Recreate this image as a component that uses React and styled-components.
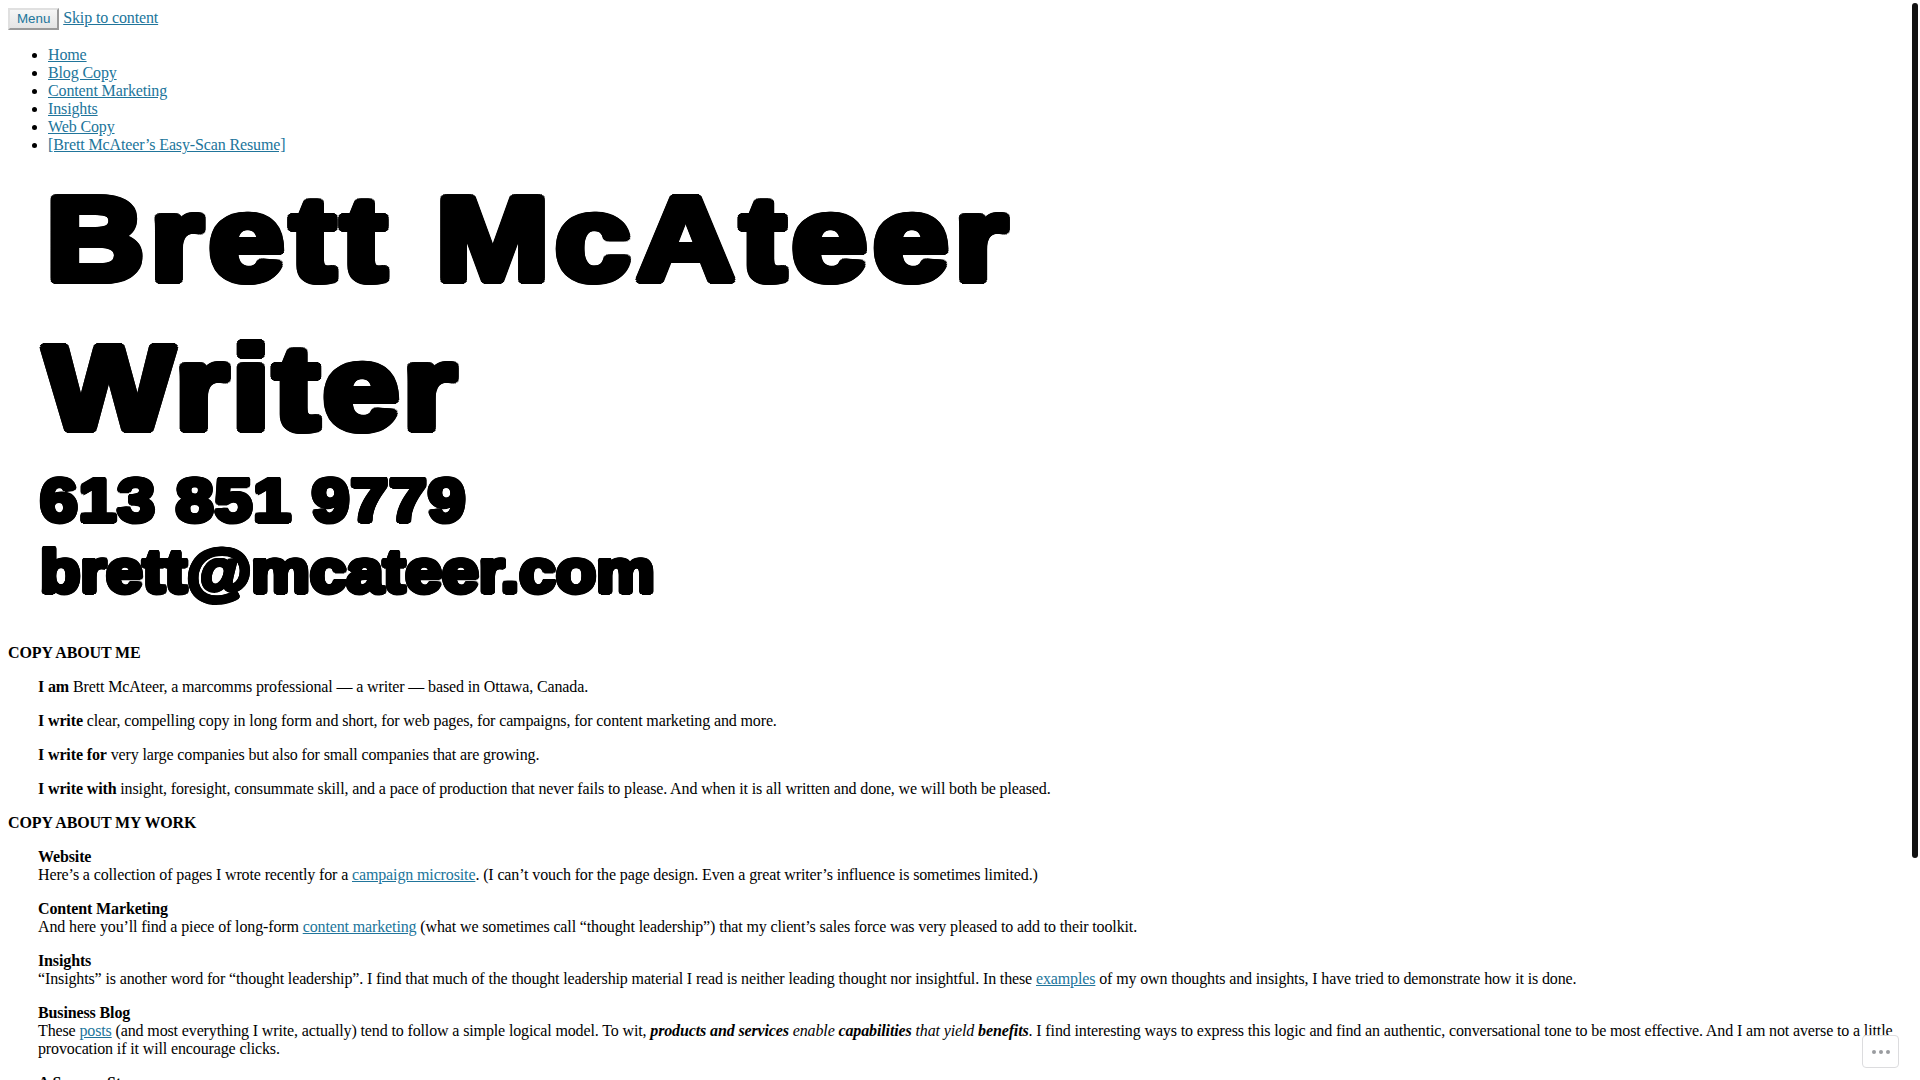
import styled, { createGlobalStyle } from "styled-components";

// heavy outline built from shadows, used to thicken the bold logo type
const thicken = (r) => {
  const out = [];
  for (let i = 0; i < 16; i++) {
    const a = (i / 16) * Math.PI * 2;
    out.push(`${(Math.cos(a) * r).toFixed(2)}px ${(Math.sin(a) * r).toFixed(2)}px 0 #000`);
  }
  return out.join(", ");
};

const GlobalStyle = createGlobalStyle`
  body {
    margin: 8px;
    background: #fff;
    color: #000;
    font-family: "Liberation Serif", "Times New Roman", serif;
    font-size: 16px;
    letter-spacing: -0.13px;
  }
  a {
    color: #21759b;
  }
`;

const Header = styled.header``;

const Nav = styled.nav``;

const MenuButton = styled.button`
  font-family: "Liberation Sans", Arial, sans-serif;
  font-size: 13.33px;
  color: #21759b;
  padding: 1px 7px 2px;
  background: linear-gradient(#f6f6f6, #e4e4e4);
  border: 2px solid;
  border-color: #e0e0e0 #9a9a9a #9a9a9a #e0e0e0;
  border-radius: 0;
  cursor: pointer;
`;

const NavList = styled.ul`
  margin: 16px 0;
  padding-left: 40px;
  list-style: disc;
`;

const Logo = styled.div`
  padding: 3px 0 15px 32px;
  font-family: "Liberation Sans", Arial, sans-serif;
  font-weight: 700;
  color: #000;
`;

const LogoLine = styled.div`
  font-size: ${(p) => p.$size}px;
  line-height: ${(p) => p.$lh}px;
  letter-spacing: ${(p) => p.$track}px;
  padding-left: ${(p) => p.$indent}px;
  text-shadow: ${(p) => thicken(p.$weight)};
  white-space: nowrap;
`;

const LogoText = styled.span`
  display: inline-block;
  transform: scaleX(${(p) => p.$wide});
  transform-origin: left center;
`;

const Label = styled.p`
  margin: 16px 0;
  font-weight: 700;
`;

const Para = styled.p`
  margin: 16px 0;
  padding-left: 30px;
`;

const Footer = styled.footer`
  padding: 24px 0 16px;
`;

const ScrollThumb = styled.div`
  position: fixed;
  top: 3px;
  right: 2px;
  width: 6px;
  height: 855px;
  border-radius: 3px;
  background: #111;
`;

const ActionBar = styled.button`
  position: fixed;
  right: 21px;
  bottom: 12px;
  width: 37px;
  height: 33px;
  padding: 0;
  display: flex;
  align-items: center;
  justify-content: center;
  gap: 3px;
  background: #fff;
  border: 1px solid #dcdcde;
  border-radius: 4px;
  cursor: pointer;
`;

const Dot = styled.span`
  width: 4px;
  height: 4px;
  border-radius: 50%;
  background: #9a9ca0;
`;

const menu = [
  "Home",
  "Blog Copy",
  "Content Marketing",
  "Insights",
  "Web Copy",
  "[Brett McAteer’s Easy-Scan Resume]",
];

const logoLines = [
  { text: "Brett McAteer", size: 118, lh: 133, track: 5, indent: 6, weight: 4, wide: 1.153 },
  { text: "Writer", size: 118, lh: 165, track: 3, indent: 4, weight: 4, wide: 1.165 },
  { text: "613 851 9779", size: 62, lh: 57, track: 1, indent: 0, weight: 2.5, wide: 1.09 },
  { text: "brett@mcateer.com", size: 62, lh: 85, track: 0, indent: 0, weight: 2.5, wide: 1.065 },
];

export default function App() {
  return (
    <>
      <GlobalStyle />
      <Header>
        <Nav>
          <MenuButton>Menu</MenuButton> <a href="#content">Skip to content</a>
          <NavList>
            {menu.map((item) => (
              <li key={item}>
                <a href="#">{item}</a>
              </li>
            ))}
          </NavList>
        </Nav>
        <Logo>
          {logoLines.map((l) => (
            <LogoLine
              key={l.text}
              $size={l.size}
              $lh={l.lh}
              $track={l.track}
              $indent={l.indent}
              $weight={l.weight}
            >
              <LogoText $wide={l.wide}>{l.text}</LogoText>
            </LogoLine>
          ))}
        </Logo>
      </Header>

      <main id="content">
        <Label>COPY ABOUT ME</Label>
        <Para>
          <strong>I am</strong> Brett McAteer, a marcomms professional — a writer — based in Ottawa, Canada.
        </Para>
        <Para>
          <strong>I write</strong> clear, compelling copy in long form and short, for web pages, for campaigns, for
          content marketing and more.
        </Para>
        <Para>
          <strong>I write for</strong> very large companies but also for small companies that are growing.
        </Para>
        <Para>
          <strong>I write with</strong> insight, foresight, consummate skill, and a pace of production that never
          fails to please. And when it is all written and done, we will both be pleased.
        </Para>

        <Label>COPY ABOUT MY WORK</Label>
        <Para>
          <strong>Website</strong>
          <br />
          Here’s a collection of pages I wrote recently for a <a href="#">campaign microsite</a>. (I can’t vouch for
          the page design. Even a great writer’s influence is sometimes limited.)
        </Para>
        <Para>
          <strong>Content Marketing</strong>
          <br />
          And here you’ll find a piece of long-form <a href="#">content marketing</a> (what we sometimes call
          “thought leadership”) that my client’s sales force was very pleased to add to their toolkit.
        </Para>
        <Para>
          <strong>Insights</strong>
          <br />
          “Insights” is another word for “thought leadership”. I find that much of the thought leadership material I
          read is neither leading thought nor insightful. In these <a href="#">examples</a> of my own thoughts and
          insights, I have tried to demonstrate how it is done.
        </Para>
        <Para>
          <strong>Business Blog</strong>
          <br />
          These <a href="#">posts</a> (and most everything I write, actually) tend to follow a simple logical model.
          To wit,{" "}
          <em>
            <strong>products and services</strong> enable <strong>capabilities</strong> that yield{" "}
            <strong>benefits</strong>
          </em>
          . I find interesting ways to express this logic and find an authentic, conversational tone to be most
          effective. And I am not averse to a little provocation if it will encourage clicks.
        </Para>
        <Para>
          <strong>A Success Story</strong>
          <br />
          Here is a <a href="#">case study</a> I wrote about a client’s results.
        </Para>
      </main>

      <Footer>
        <a href="#">Blog at WordPress.com.</a>
      </Footer>

      <ScrollThumb />
      <ActionBar aria-label="Actions">
        <Dot />
        <Dot />
        <Dot />
      </ActionBar>
    </>
  );
}
